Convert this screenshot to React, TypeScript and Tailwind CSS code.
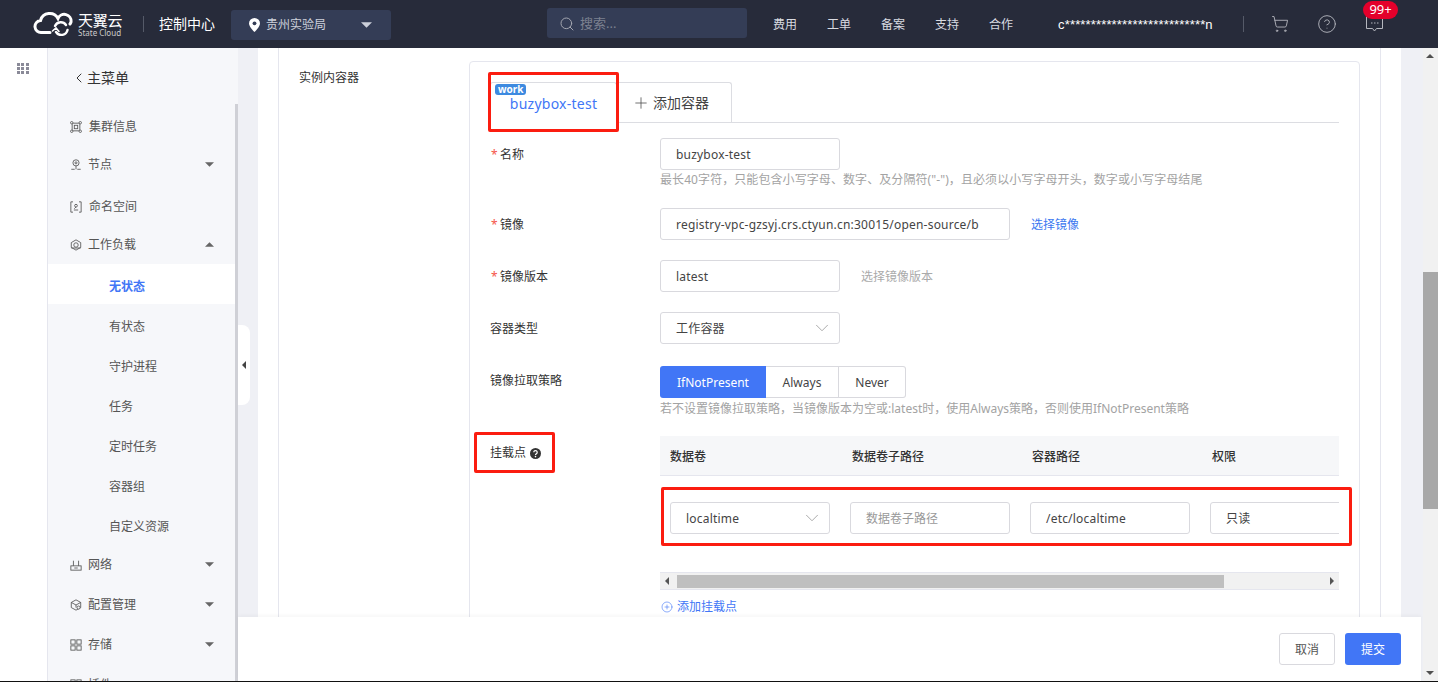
import { ChevronDown, ChevronLeft, CircleHelp, CirclePlus, Plus, Search, ShoppingCart } from "lucide-react"
import type { ReactNode } from "react"

const FONT = "font-['Noto_Sans','Noto_Sans_CJK_SC',sans-serif]"

function Tri({ dir = "down", className = "" }: { dir?: "down" | "up" | "left" | "right"; className?: string }) {
  const points = { down: "0,0 10,0 5,5", up: "0,5 10,5 5,0", left: "5,0 5,10 0,5", right: "0,0 0,10 5,5" }[dir]
  const box = dir === "down" || dir === "up" ? "0 0 10 5" : "0 0 5 10"
  return (
    <svg viewBox={box} className={className} fill="currentColor">
      <polygon points={points} />
    </svg>
  )
}

function Logo() {
  return (
    <svg viewBox="0 0 40 24" className="h-6 w-10" fill="none" stroke="#fff" strokeWidth="3" strokeLinecap="round">
      <path d="M17 20.5H8.5a6 6 0 0 1-1-12A9.5 9.5 0 0 1 25 6.5a6.8 6.8 0 0 1 13 3.5 6 6 0 0 1-1 2" />
      <path d="M22 14a6.3 6.3 0 0 1 11-1" strokeWidth="2.4" />
      <path d="M34.5 18a6.3 6.3 0 0 1-11.5 2" strokeWidth="2.4" />
      <path d="M19.5 19l3.5-3 3 3.5" strokeWidth="1.6" />
    </svg>
  )
}

function NavIcon({ name }: { name: string }) {
  const body: Record<string, ReactNode> = {
    cluster: (
      <>
        <rect x="2.5" y="2.5" width="9" height="9" />
        <rect x="5" y="5" width="4" height="4" />
        <circle cx="2" cy="2" r="1.4" fill="#f6f7fa" />
        <circle cx="12" cy="2" r="1.4" fill="#f6f7fa" />
        <circle cx="2" cy="12" r="1.4" fill="#f6f7fa" />
        <circle cx="12" cy="12" r="1.4" fill="#f6f7fa" />
      </>
    ),
    node: (
      <>
        <circle cx="7" cy="4.5" r="3.6" />
        <circle cx="7" cy="4.5" r="1.2" />
        <path d="M7 8v4M1.5 12h4M8.5 12h4" />
      </>
    ),
    namespace: (
      <>
        <path d="M3.5 1H1v12h2.5M10.5 1H13v12h-2.5" />
        <circle cx="7" cy="5.5" r="1.6" />
        <path d="M4.5 10.5h5M5 9l2-2" />
      </>
    ),
    workload: (
      <>
        <path d="M7 1l5.5 3.2v5.6L7 13l-5.5-3.2V4.2z" />
        <circle cx="7" cy="7" r="2.6" />
        <path d="M1.5 10.5h11" />
      </>
    ),
    network: (
      <>
        <rect x="1" y="8" width="12" height="5" />
        <path d="M4 8V2M10 8V2M5 10.5h4" />
      </>
    ),
    config: (
      <>
        <path d="M7 1l5.5 3v6L7 13l-5.5-3V4z" />
        <path d="M1.5 4L7 7l5.5-3M7 7v3" />
        <circle cx="10" cy="10" r="1.8" fill="#f6f7fa" />
      </>
    ),
    storage: (
      <>
        <rect x="1" y="1" width="5" height="5" />
        <rect x="8" y="1" width="5" height="5" />
        <rect x="1" y="8" width="5" height="5" />
        <rect x="8" y="8" width="5" height="5" />
      </>
    ),
  }
  return (
    <svg viewBox="0 0 14 14" className="h-3 w-3 shrink-0" fill="none" stroke="#555" strokeWidth="1">
      {body[name]}
    </svg>
  )
}

function MenuRow({
  icon,
  label,
  arrow,
  gap = "gap-[6px]",
  top = "",
}: {
  icon: string
  label: string
  arrow?: "down" | "up"
  gap?: string
  top?: string
}) {
  return (
    <div className={`flex h-10 items-center pl-[22px] pr-[24px] text-xs text-[#555] ${top}`}>
      <div className={`flex flex-1 items-center pt-0.5 ${gap}`}>
        <NavIcon name={icon} />
        <span>{label}</span>
      </div>
      {arrow && <Tri dir={arrow} className="h-[5px] w-[9px] text-[#666]" />}
    </div>
  )
}

function SubRow({ label, active }: { label: string; active?: boolean }) {
  return (
    <div
      className={`flex h-10 items-center pl-[61px] pt-1.5 text-xs ${
        active ? "bg-white font-bold text-[#4176f6]" : "text-[#555]"
      }`}
    >
      {label}
    </div>
  )
}

function Sidebar() {
  return (
    <aside className="relative w-[191px] shrink-0 overflow-hidden border-l border-[#e5e6ee] bg-[#f6f7fa]">
      <div className="mt-2.5 flex h-10 items-center pl-6 text-sm text-[#333]">
        <ChevronLeft className="h-4 w-4 -ml-px" strokeWidth={1.5} />
        <span>主菜单</span>
      </div>
      <MenuRow icon="cluster" label="集群信息" gap="gap-[7px]" top="mt-2" />
      <MenuRow icon="node" label="节点" arrow="down" top="-mt-0.5" />
      <MenuRow icon="namespace" label="命名空间" gap="gap-[7px]" top="mt-0.5" />
      <MenuRow icon="workload" label="工作负载" arrow="up" top="-mt-0.5" />
      <SubRow label="无状态" active />
      <SubRow label="有状态" />
      <SubRow label="守护进程" />
      <SubRow label="任务" />
      <SubRow label="定时任务" />
      <SubRow label="容器组" />
      <SubRow label="自定义资源" />
      <MenuRow icon="network" label="网络" arrow="down" />
      <MenuRow icon="config" label="配置管理" arrow="down" />
      <MenuRow icon="storage" label="存储" arrow="down" />
      <MenuRow icon="storage" label="插件" arrow="down" />
      <div className="absolute right-0 top-14 bottom-0 w-[3px] bg-[#cfd0d6]" />
    </aside>
  )
}

function Header() {
  return (
    <header className="flex h-12 shrink-0 items-center bg-[#272b3a] pl-[33px] text-xs text-[#d9dbe1]">
      <Logo />
      <div className="ml-[5px] flex w-[45px] flex-col text-white">
        <span className="text-[15px] leading-[16px] tracking-[-0.2px]">天翼云</span>
        <span className="whitespace-nowrap text-[8px] leading-[9px] text-[#ccc]">State Cloud</span>
      </div>
      <div className="ml-5 h-4 w-px bg-[#555a68]" />
      <span className="ml-[15px] text-sm text-white">控制中心</span>
      <div className="ml-4 mt-0.5 flex h-[30px] w-40 items-center rounded-[3px] bg-[#343d56] pl-[18px] pr-[19px] text-[#ccd0da]">
        <svg viewBox="0 0 11 14" className="h-3.5 w-[11px]">
          <path d="M5.5 0a5.5 5.5 0 0 1 5.5 5.5C11 9 5.5 14 5.5 14S0 9 0 5.5A5.5 5.5 0 0 1 5.5 0z" fill="#fff" />
          <circle cx="5.5" cy="5.3" r="1.9" fill="#343d56" />
        </svg>
        <span className="ml-[6px] flex-1">贵州实验局</span>
        <Tri className="h-1.5 w-[11px]" />
      </div>
      <div className="-mt-0.5 ml-[156px] flex h-[30px] w-[200px] items-center rounded-[3px] bg-[#343d56] pl-3 pt-0.5 text-[13px] text-[#7c8190]">
        <Search className="h-4 w-4 text-[#a3a6b0]" strokeWidth={1.5} />
        <span className="ml-[5px]">搜索...</span>
      </div>
      <nav className="ml-[26px] flex gap-[30px] pt-0.5">
        <span>费用</span>
        <span>工单</span>
        <span>备案</span>
        <span>支持</span>
        <span>合作</span>
      </nav>
      <span className="ml-[45px] w-[156px] whitespace-nowrap pt-0.5 font-['Liberation_Sans',sans-serif] text-[13px] tracking-[0.15px] text-white">
        c***************************n
      </span>
      <div className="ml-[29px] h-4 w-px bg-[#555a68]" />
      <ShoppingCart className="ml-[27px] h-[18px] w-[18px] text-[#b5b7be]" strokeWidth={1.2} />
      <CircleHelp className="ml-[28px] h-5 w-5 text-[#b5b7be]" strokeWidth={1.1} />
      <div className="relative ml-[29px] h-4 w-[17px]">
        <svg viewBox="0 0 17 16" className="h-4 w-[17px]" fill="none" stroke="#b5b7be">
          <path d="M.5.5h16v12h-6l-2 2.5-2-2.5h-6z" />
          <path d="M5 7h1.5M8 7h1.5M11 7h1.5" />
        </svg>
        <span className="absolute -right-[15px] -top-[15px] flex h-[18px] w-[35px] items-center justify-center rounded-full bg-[#e4002b] text-[13px] text-white">
          99+
        </span>
      </div>
    </header>
  )
}

function Box({ children, className = "", muted }: { children?: ReactNode; className?: string; muted?: boolean }) {
  return (
    <div
      className={`flex h-8 shrink-0 items-center rounded-[3px] border border-[#d9d9de] bg-white pl-[15px] pt-0.5 text-xs tracking-[0.2px] ${
        muted ? "text-[#999]" : "text-[#444]"
      } ${className}`}
    >
      {children}
    </div>
  )
}

function SelectArrow() {
  return <ChevronDown className="-mt-0.5 h-[22px] w-[22px] text-[#999]" strokeWidth={0.9} />
}

function FormRow({
  label,
  required,
  children,
  className = "",
  labelClass = "",
}: {
  label: ReactNode
  required?: boolean
  children: ReactNode
  className?: string
  labelClass?: string
}) {
  return (
    <div className={`flex ${className}`}>
      <div className={`flex h-8 w-[170px] shrink-0 items-center pt-0.5 text-xs text-[#333] ${labelClass}`}>
        {required && <span className="ml-px w-[9px] text-[#f5554a]">*</span>}
        {label}
      </div>
      <div className="min-w-0 flex-1">{children}</div>
    </div>
  )
}

function Hint({ children, className = "" }: { children: ReactNode; className?: string }) {
  return <p className={`whitespace-nowrap text-xs leading-[18px] text-[#a3a3a3] ${className}`}>{children}</p>
}

function RedBox({ className }: { className: string }) {
  return <div className={`pointer-events-none absolute rounded-[2px] border-[3px] border-[#fb1d10] ${className}`} />
}

function Container() {
  return (
    <div className="relative rounded-[4px] border border-[#e5e6ee] px-5 pt-5 pb-10">
      <div className="flex h-[41px] border-b border-[#dcdde2]">
        <div className="relative -mb-px flex w-[127px] items-center justify-center rounded-t-[3px] border border-b-0 border-[#dcdde2] bg-white pt-px text-sm tracking-[0.25px] text-[#4176f6]">
          <span className="absolute left-[4px] top-px rounded-[3px] bg-[#3d8ae0] px-[3px] text-[10px] font-bold leading-[11px] tracking-normal text-white">
            work
          </span>
          <span className="mt-px">buzybox-test</span>
        </div>
        <div className="-ml-px flex w-[116px] items-center gap-[3px] rounded-t-[3px] border border-b-0 border-[#dcdde2] pl-[15px] text-sm text-[#444]">
          <Plus className="h-[18px] w-[18px]" strokeWidth={1} />
          <span>添加容器</span>
        </div>
      </div>

      <FormRow label="名称" required className="mt-[15px]">
        <Box className="w-[180px]">buzybox-test</Box>
        <Hint className="-mb-px pt-px tracking-[0.08px]">
          最长40字符，只能包含小写字母、数字、及分隔符("-")，且必须以小写字母开头，数字或小写字母结尾
        </Hint>
      </FormRow>

      <FormRow label="镜像" required className="mt-5">
        <div className="flex items-center">
          <Box className="w-[350px] pr-[30px]">
            <span className="block overflow-hidden whitespace-nowrap">
              registry-vpc-gzsyj.crs.ctyun.cn:30015/open-source/bu
            </span>
          </Box>
          <span className="ml-[21px] pt-0.5 text-xs text-[#3b78f0]">选择镜像</span>
        </div>
      </FormRow>

      <FormRow label="镜像版本" required className="mt-5">
        <div className="flex items-center">
          <Box className="w-[180px]">latest</Box>
          <span className="ml-[21px] pt-0.5 text-xs text-[#aaa]">选择镜像版本</span>
        </div>
      </FormRow>

      <FormRow label="容器类型" className="mt-5">
        <Box className="w-[180px] justify-between pr-[6px]">
          工作容器
          <SelectArrow />
        </Box>
      </FormRow>

      <FormRow label="镜像拉取策略" className="mt-[22px]" labelClass="-mt-0.5">
        <div className="flex h-8 w-fit pt-px text-xs text-[#444]">
          <span className="-mt-px flex w-[106px] items-center justify-center rounded-l-[3px] bg-[#4176f6] pt-0.5 text-white">IfNotPresent</span>
          <span className="-mt-px flex w-[73px] items-center justify-center border-y border-r border-[#d9d9de] pt-0.5">Always</span>
          <span className="-mt-px flex w-[67px] items-center justify-center rounded-r-[3px] border-y border-r border-[#d9d9de] pt-0.5">Never</span>
        </div>
        <Hint className="-mb-0.5 pt-0.5">若不设置镜像拉取策略，当镜像版本为空或:latest时，使用Always策略，否则使用IfNotPresent策略</Hint>
      </FormRow>

      <FormRow
        label={
          <span className="flex items-center gap-1">
            挂载点
            <svg viewBox="0 0 11 11" className="h-[11px] w-[11px]">
              <circle cx="5.5" cy="5.5" r="5.5" fill="#333" />
              <path d="M3.8 4.3a1.7 1.7 0 1 1 2.6 1.4c-.6.4-.9.7-.9 1.3" fill="none" stroke="#fff" strokeWidth="1.2" />
              <circle cx="5.5" cy="8.6" r=".8" fill="#fff" />
            </svg>
          </span>
        }
        className="mt-5"
      >
        <div className="flex h-10 items-center border-b border-[#e5e6ee] bg-[#f6f7f9] pt-0.5 text-xs font-medium text-[#333]">
          <span className="w-[182px] pl-2.5">数据卷</span>
          <span className="w-[180px] pl-2.5">数据卷子路径</span>
          <span className="w-[180px] pl-2.5">容器路径</span>
          <span className="pl-2.5">权限</span>
        </div>
        <div className="flex gap-5 overflow-hidden pl-2.5 pt-[26px]">
          <Box className="w-40 justify-between pr-[6px]">
            localtime
            <SelectArrow />
          </Box>
          <Box className="w-40 tracking-normal" muted>数据卷子路径</Box>
          <Box className="w-40">/etc/localtime</Box>
          <Box className="w-40">只读</Box>
        </div>
        <div className="mt-[38px] flex h-[18px] items-center border-y border-[#e5e6ee] bg-[#f1f1f1] px-[5px] text-[#555]">
          <Tri dir="left" className="h-2 w-1" />
          <div className="ml-[8px] h-[13px] w-[547px] bg-[#bfbfbf]" />
          <div className="flex-1" />
          <Tri dir="right" className="h-2 w-1" />
        </div>
        <div className="mt-2 flex h-[18px] items-center gap-1 pl-px text-xs text-[#4176f6]">
          <CirclePlus className="h-3 w-3" strokeWidth={1.2} />
          <span>添加挂载点</span>
        </div>
      </FormRow>

      <RedBox className="left-[18px] top-[10px] h-[60px] w-[131px]" />
      <RedBox className="left-[4px] top-[370px] h-[41px] w-[81px]" />
      <RedBox className="left-[191px] top-[425px] h-[59px] w-[691px]" />
    </div>
  )
}

export default function App() {
  return (
    <div className={`relative flex h-[682px] w-full flex-col overflow-hidden bg-white ${FONT}`}>
      <Header />
      <div className="flex min-h-0 flex-1">
        <div className="w-[47px] shrink-0 pl-[17px] pt-[15px]">
          <div className="grid w-3 grid-cols-3 gap-px">
            {Array.from({ length: 9 }).map((_, i) => (
              <span key={i} className="h-[3px] w-[3px] bg-[#8a8a98]" />
            ))}
          </div>
        </div>
        <Sidebar />
        <main className="relative min-w-0 flex-1 overflow-hidden bg-[#eff0f5] pl-5 pr-[22px]">
          <div className="h-full bg-white px-5">
            <div className="flex h-full border-x border-[#e5e6ee] pl-5 pr-5 pt-[13px]">
              <div className="w-[170px] shrink-0 pt-[9px] text-xs leading-[16px] text-[#333]">实例内容器</div>
              <div className="min-w-0 flex-1">
                <Container />
              </div>
            </div>
          </div>
          <button className="absolute left-0 top-[277px] flex h-20 w-3 items-center justify-center rounded-r-lg bg-white text-[#444]">
            <Tri dir="left" className="h-2 w-1" />
          </button>
        </main>
        <div className="relative w-[15px] shrink-0 bg-[#f1f1f1] text-[#505050]">
          <Tri dir="up" className="absolute left-[3px] top-[6px] h-1 w-2" />
          <div className="absolute inset-x-0 top-[224px] h-[237px] bg-[#a8a8a8]" />
          <Tri dir="down" className="absolute bottom-[6px] left-[3px] h-1 w-2" />
        </div>
      </div>
      <div className="h-px shrink-0 bg-[#111]" />
      <footer className="absolute bottom-px left-[238px] right-[17px] flex h-16 items-start justify-end gap-2.5 bg-white pr-5 pt-4 text-xs shadow-[0_-2px_3px_rgba(0,0,0,0.03)]">
        <button className="h-8 w-14 rounded-[3px] border border-[#d9d9de] pt-0.5 text-[#555]">取消</button>
        <button className="h-8 w-14 rounded-[3px] bg-[#4176f6] pt-0.5 text-white">提交</button>
      </footer>
    </div>
  )
}
